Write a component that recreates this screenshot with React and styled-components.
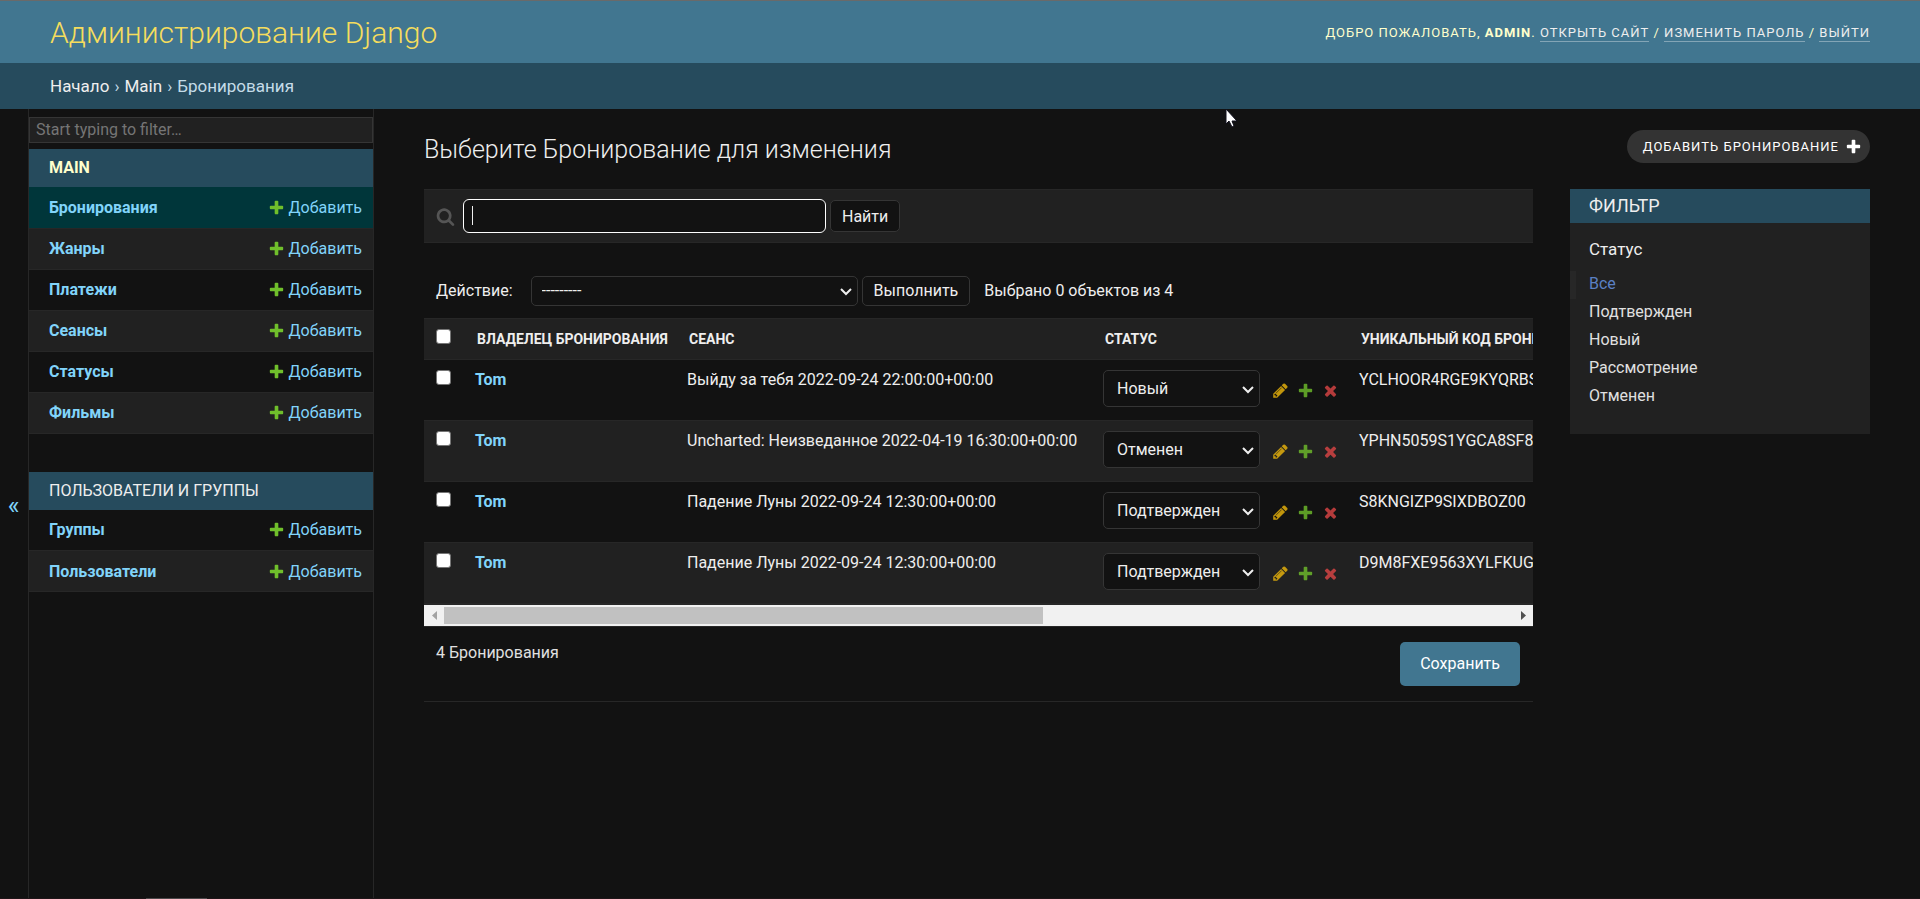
import React from "react";
import styled, { createGlobalStyle } from "styled-components";

const GlobalStyle = createGlobalStyle`
  *, *::before, *::after { box-sizing: border-box; }
  html, body { margin: 0; padding: 0; background: #121212; }
  body, button, input, select {
    font-family: Roboto, "Liberation Sans", sans-serif;
    font-size: 16px;
    color: #eeeeee;
  }
  a { color: #81d4fa; text-decoration: none; }
`;

const PATHS = {
  add: "M1600 796v192q0 40-28 68t-68 28h-416v416q0 40-28 68t-68 28h-192q-40 0-68-28t-28-68v-416h-416q-40 0-68-28t-28-68v-192q0-40 28-68t68-28h416v-416q0-40 28-68t68-28h192q40 0 68 28t28 68v416h416q40 0 68 28t28 68z",
  change:
    "M491 1536l91-91-235-235-91 91v107h128v128h107zm523-928q0-22-22-22-10 0-17 7l-542 542q-7 7-7 17 0 22 22 22 10 0 17-7l542-542q7-7 7-17zm-54-192l416 416-832 832h-416v-416zm683 96q0 53-37 90l-166 166-416-416 166-165q36-38 90-38 53 0 91 38l235 234q37 39 37 91z",
  remove:
    "M1490 1322q0 40-28 68l-136 136q-28 28-68 28t-68-28l-294-294-294 294q-28 28-68 28t-68-28l-136-136q-28-28-28-68t28-68l294-294-294-294q-28-28-28-68t28-68l136-136q28-28 68-28t68 28l294 294 294-294q28-28 68-28t68 28l136 136q28 28 28 68t-28 68l-294 294 294 294q28 28 28 68z",
  search:
    "M1216 832q0-185-131.5-316.5t-316.5-131.5-316.5 131.5-131.5 316.5 131.5 316.5 316.5 131.5 316.5-131.5 131.5-316.5zm512 832q0 52-38 90t-90 38q-54 0-90-38l-343-342q-179 124-399 124-143 0-273.5-55.5t-225-150-150-225-55.5-273.5 55.5-273.5 150-225 225-150 273.5-55.5 273.5 55.5 225 150 150 225 55.500 273.5q0 220-124 399l343 343q37 37 37 90z",
};

function Icon({ name, size = 17, color }) {
  return (
    <svg width={size} height={size} viewBox="0 0 1792 1792" fill={color} aria-hidden="true">
      <path d={PATHS[name]} />
    </svg>
  );
}

const Page = styled.div`
  display: flex;
  flex-direction: column;
  min-height: 100vh;
  border-top: 1px solid #6a6a6a;
`;

const Header = styled.header`
  display: flex;
  align-items: center;
  justify-content: space-between;
  height: 62px;
  padding: 2px 50px 0;
  background: #417690;
`;

const Branding = styled.h1`
  margin: 0;
  font-size: 30px;
  font-weight: 300;
  line-height: 36px;
  a { color: #f5dd5d; }
`;

const UserTools = styled.div`
  color: #ffffcc;
  font-size: 13px;
  line-height: 17px;
  font-weight: 400;
  letter-spacing: 1px;
  text-transform: uppercase;
  a {
    display: inline-block;
    color: #eeeeee;
    border-bottom: 1px solid rgba(255, 255, 255, 0.35);
  }
`;

const Breadcrumbs = styled.nav`
  display: flex;
  align-items: center;
  gap: 5px;
  height: 46px;
  padding: 0 50px;
  background: #264b5d;
  color: #c4dce8;
  font-size: 17px;
  a { color: #eeeeee; }
`;

const Main = styled.div`
  display: flex;
  flex: 1;
`;

const NavToggle = styled.button`
  flex: 0 0 29px;
  padding: 3px 1px 0 0;
  border: 0;
  border-right: 1px solid #272727;
  background: #121212;
  color: #81d4fa;
  font-size: 25px;
`;

const Sidebar = styled.nav`
  flex: 0 0 345px;
  padding-top: 8px;
  border-right: 1px solid #272727;
`;

const NavFilter = styled.input`
  display: block;
  width: 100%;
  height: 26px;
  margin-bottom: 6px;
  padding: 0 6px 2px;
  border: 1px solid #353535;
  border-radius: 0;
  background: #212121;
  &::placeholder { color: #757575; }
`;

const AppTable = styled.table`
  width: 100%;
  margin-bottom: 38px;
  border-collapse: collapse;
  caption {
    height: 38px;
    padding: 0 20px;
    background: #264b5d;
    line-height: 38px;
    text-align: left;
    text-transform: uppercase;
  }
  caption a {
    color: ${(p) => (p.$active ? "#ffffcc" : "#eeeeee")};
    font-weight: ${(p) => (p.$active ? 700 : 400)};
  }
`;

const ModelRow = styled.tr`
  height: 41px;
  background: ${(p) => (p.$current ? "#00363a" : p.$alt ? "#212121" : "#121212")};
  border-bottom: 1px solid #272727;
  th { padding: 0 20px; text-align: left; font-weight: 700; }
  td { padding: 0 11px 0 0; }
`;

const AddLink = styled.a`
  display: flex;
  align-items: center;
  justify-content: flex-end;
  gap: 4px;
`;

const Content = styled.main`
  flex: 1;
  min-width: 0;
  padding: 21px 50px 40px;
`;

const TitleRow = styled.div`
  display: flex;
  justify-content: space-between;
  align-items: flex-start;
  height: 59px;
`;

const Title = styled.h2`
  margin: 0;
  padding-top: 5px;
  font-size: 25px;
  font-weight: 300;
  line-height: 30px;
`;

const AddButton = styled.a`
  display: flex;
  align-items: center;
  gap: 6px;
  height: 33px;
  padding: 0 8px 0 16px;
  border-radius: 17px;
  background: #333333;
  color: #ffffff;
  font-size: 13px;
  letter-spacing: 1px;
  text-transform: uppercase;
`;

const Columns = styled.div`
  display: flex;
  align-items: flex-start;
  gap: 37px;
`;

const ChangeList = styled.section`
  flex: 1;
  min-width: 0;
`;

const Toolbar = styled.form`
  display: flex;
  align-items: center;
  height: 54px;
  padding: 0 12px;
  border-top: 1px solid #272727;
  border-bottom: 1px solid #272727;
  background: #212121;
  label { display: flex; width: 27px; }
`;

const SearchField = styled.div`
  position: relative;
  display: flex;
  margin-right: 4px;
`;

const SearchInput = styled.input`
  width: 363px;
  height: 34px;
  padding: 0 8px;
  border: 1px solid #ffffff;
  border-radius: 6px;
  background: #121212;
  outline: none;
`;

const Caret = styled.span`
  position: absolute;
  left: 9px;
  top: 7px;
  width: 1px;
  height: 19px;
  background: #eeeeee;
`;

const OutlineButton = styled.button`
  height: ${(p) => p.$height}px;
  padding: 0 11px;
  border: 1px solid #353535;
  border-radius: 5px;
  background: #121212;
`;

const Actions = styled.form`
  display: flex;
  align-items: center;
  height: 75px;
  padding: 20px 12px 0;
  label { display: flex; align-items: center; gap: 18px; }
`;

const SelectBox = styled.span`
  position: relative;
  display: inline-flex;
  width: ${(p) => p.$width}px;
  margin-right: ${(p) => p.$gap}px;
  select {
    width: 100%;
    height: ${(p) => p.$height}px;
    padding: 0 ${(p) => p.$pad}px;
    border: 1px solid #353535;
    border-radius: 5px;
    background: #121212;
    appearance: none;
  }
  svg {
    position: absolute;
    right: 6px;
    top: 50%;
    margin-top: -3px;
    pointer-events: none;
  }
`;

const ActionCount = styled.span`
  margin-left: 14px;
`;

const TableScroll = styled.div`
  overflow: hidden;
  padding-bottom: 1px;
  background: #272727;
`;

const ResultTable = styled.table`
  width: 179%;
  table-layout: fixed;
  border-collapse: collapse;
  white-space: nowrap;
  th, td { text-align: left; vertical-align: top; }
`;

const Col = styled.col`
  width: ${(p) => (p.$width ? `${p.$width}px` : "auto")};
`;

const HeadRow = styled.tr`
  height: 41px;
  background: #212121;
  border-top: 1px solid #272727;
  border-bottom: 1px solid #272727;
  th { padding: 11px 12px 0; font-size: 14px; font-weight: 700; line-height: 18px; text-transform: uppercase; }
  th:first-child { padding-top: 10px; }
`;

const ResultRow = styled.tr`
  height: 61px;
  background: ${(p) => (p.$alt ? "#212121" : "#121212")};
  border-bottom: 1px solid #272727;
  th, td { padding: 10px 10px 0; line-height: 19px; }
  th { font-weight: 700; }
  td:first-child { padding-left: 12px; }
`;

const Checkbox = styled.input`
  display: block;
  appearance: none;
  width: 15px;
  height: 15px;
  margin: 0;
  border: 1px solid #767676;
  border-radius: 3px;
  background: #ffffff;
`;

const StatusCell = styled.div`
  display: flex;
  align-items: center;
`;

const RowActions = styled.span`
  display: flex;
  gap: 8px;
  padding-top: 3px;
  opacity: 0.8;
  a { display: flex; }
`;

const ScrollBar = styled.div`
  display: flex;
  align-items: center;
  height: 21px;
  background: #f1f1f1;
`;

const ScrollArrow = styled.svg`
  flex: 0 0 20px;
  height: 21px;
`;

const ScrollTrack = styled.div`
  flex: 1;
`;

const ScrollThumb = styled.div`
  width: 56%;
  height: 17px;
  background: #c1c1c1;
`;

const Paginator = styled.div`
  display: flex;
  justify-content: space-between;
  align-items: flex-start;
  height: 76px;
  padding: 15px 13px 0 12px;
  border-top: 1px solid #272727;
  border-bottom: 1px solid #272727;
  line-height: 22px;
  color: #e0e0e0;
`;

const SaveButton = styled.button`
  height: 44px;
  padding: 0 20px 2px;
  border: 0;
  border-radius: 5px;
  background: #417690;
  color: #ffffff;
`;

const FilterPanel = styled.aside`
  flex: 0 0 300px;
  padding-bottom: 23px;
  background: #212121;
  h2 {
    margin: 0;
    padding: 0 19px;
    background: #264b5d;
    font-size: 18px;
    font-weight: 400;
    line-height: 34px;
    text-transform: uppercase;
  }
  h3 {
    margin: 0;
    padding: 15px 19px 11px;
    font-size: 17px;
    font-weight: 400;
    line-height: 22px;
  }
  ul { margin: 0; padding: 0; list-style: none; }
`;

const FilterItem = styled.li`
  height: 28px;
  padding-left: ${(p) => (p.$selected ? 13 : 19)}px;
  border-left: ${(p) => (p.$selected ? "6px solid #272727" : "0")};
  line-height: 26px;
  a { color: ${(p) => (p.$selected ? "#5b80c4" : "#e0e0e0")}; }
`;

const BottomEdge = styled.div`
  height: 1px;
  padding-left: 146px;
  background: #1e1518;
  span { display: block; width: 61px; height: 1px; background: #4c484a; }
`;

const Pointer = styled.svg`
  position: absolute;
  left: 1225px;
  top: 108px;
  pointer-events: none;
`;

function Chevron() {
  return (
    <svg width="12" height="8" viewBox="0 0 12 8" fill="none" stroke="#eeeeee" strokeWidth="2" aria-hidden="true">
      <path d="M1 1l5 5 5-5" />
    </svg>
  );
}

const STATUSES = ["Подтвержден", "Новый", "Рассмотрение", "Отменен"];

const APPS = [
  {
    name: "Main",
    active: true,
    models: ["Бронирования", "Жанры", "Платежи", "Сеансы", "Статусы", "Фильмы"],
  },
  { name: "Пользователи и группы", active: false, models: ["Группы", "Пользователи"] },
];

const BOOKINGS = [
  { session: "Выйду за тебя 2022-09-24 22:00:00+00:00", status: "Новый", code: "YCLHOOR4RGE9KYQRBS" },
  { session: "Uncharted: Неизведанное 2022-04-19 16:30:00+00:00", status: "Отменен", code: "YPHN5059S1YGCA8SF8" },
  { session: "Падение Луны 2022-09-24 12:30:00+00:00", status: "Подтвержден", code: "S8KNGIZP9SIXDBOZ00" },
  { session: "Падение Луны 2022-09-24 12:30:00+00:00", status: "Подтвержден", code: "D9M8FXE9563XYLFKUG" },
];

export default function App() {
  return (
    <>
      <GlobalStyle />
      <Page>
        <Header>
          <Branding><a href="#home">Администрирование Django</a></Branding>
          <UserTools>
            Добро пожаловать, <strong>admin</strong>. <a href="#site">Открыть сайт</a> /{" "}
            <a href="#password">Изменить пароль</a> / <a href="#logout">Выйти</a>
          </UserTools>
        </Header>
        <Breadcrumbs>
          <a href="#home">Начало</a>
          <span>›</span>
          <a href="#main">Main</a>
          <span>›</span>
          <span>Бронирования</span>
        </Breadcrumbs>
        <Main>
          <NavToggle type="button" aria-label="Toggle navigation">«</NavToggle>
          <Sidebar>
            <NavFilter type="search" placeholder="Start typing to filter…" aria-label="Filter navigation items" />
            {APPS.map((app) => (
              <AppTable key={app.name} $active={app.active}>
                <caption><a href="#app">{app.name}</a></caption>
                <tbody>
                  {app.models.map((model, i) => (
                    <ModelRow key={model} $alt={i % 2 === 1} $current={app.active && i === 0}>
                      <th scope="row"><a href="#model">{model}</a></th>
                      <td>
                        <AddLink href="#add">
                          <Icon name="add" color="#70bf2b" />
                          Добавить
                        </AddLink>
                      </td>
                    </ModelRow>
                  ))}
                </tbody>
              </AppTable>
            ))}
          </Sidebar>
          <Content>
            <TitleRow>
              <Title>Выберите Бронирование для изменения</Title>
              <AddButton href="#add">
                Добавить Бронирование
                <Icon name="add" color="#ffffff" />
              </AddButton>
            </TitleRow>
            <Columns>
              <ChangeList>
                <Toolbar onSubmit={(e) => e.preventDefault()}>
                  <label htmlFor="searchbar" aria-label="Поиск">
                    <Icon name="search" size={19} color="#555555" />
                  </label>
                  <SearchField>
                    <SearchInput id="searchbar" type="text" />
                    <Caret />
                  </SearchField>
                  <OutlineButton type="submit" $height={32}>Найти</OutlineButton>
                </Toolbar>
                <Actions onSubmit={(e) => e.preventDefault()}>
                  <label>
                    Действие:
                    <SelectBox $width={327} $height={30} $pad={10} $gap={4}>
                      <select defaultValue="">
                        <option value="">---------</option>
                        <option value="delete">Удалить выбранные Бронирования</option>
                      </select>
                      <Chevron />
                    </SelectBox>
                  </label>
                  <OutlineButton type="submit" $height={30}>Выполнить</OutlineButton>
                  <ActionCount>Выбрано 0 объектов из 4</ActionCount>
                </Actions>
                <TableScroll>
                  <ResultTable>
                    <colgroup>
                      <Col $width={41} />
                      <Col $width={212} />
                      <Col $width={416} />
                      <Col $width={256} />
                      <Col />
                    </colgroup>
                    <thead>
                      <HeadRow>
                        <th scope="col"><Checkbox type="checkbox" aria-label="Выбрать все" /></th>
                        <th scope="col">Владелец бронирования</th>
                        <th scope="col">Сеанс</th>
                        <th scope="col">Статус</th>
                        <th scope="col">Уникальный код бронирования</th>
                      </HeadRow>
                    </thead>
                    <tbody>
                      {BOOKINGS.map((b, i) => (
                        <ResultRow key={b.code} $alt={i % 2 === 1}>
                          <td><Checkbox type="checkbox" aria-label={b.code} /></td>
                          <th scope="row"><a href="#booking">Tom</a></th>
                          <td>{b.session}</td>
                          <td>
                            <StatusCell>
                              <SelectBox $width={157} $height={37} $pad={13} $gap={12}>
                                <select defaultValue={b.status} aria-label="Статус">
                                  {STATUSES.map((s) => <option key={s}>{s}</option>)}
                                </select>
                                <Chevron />
                              </SelectBox>
                              <RowActions>
                                <a href="#change" aria-label="Изменить"><Icon name="change" color="#efb80b" /></a>
                                <a href="#add" aria-label="Добавить"><Icon name="add" color="#70bf2b" /></a>
                                <a href="#delete" aria-label="Удалить"><Icon name="remove" color="#dd4646" /></a>
                              </RowActions>
                            </StatusCell>
                          </td>
                          <td>{b.code}</td>
                        </ResultRow>
                      ))}
                    </tbody>
                  </ResultTable>
                </TableScroll>
                <ScrollBar>
                  <ScrollArrow viewBox="0 0 20 21"><path d="M13 6v9l-5-4.500z" fill="#a3a3a3" /></ScrollArrow>
                  <ScrollTrack><ScrollThumb /></ScrollTrack>
                  <ScrollArrow viewBox="0 0 20 21"><path d="M8 6v9l5-4.500z" fill="#505050" /></ScrollArrow>
                </ScrollBar>
                <Paginator>
                  <span>4 Бронирования</span>
                  <SaveButton type="submit">Сохранить</SaveButton>
                </Paginator>
              </ChangeList>
              <FilterPanel>
                <h2>Фильтр</h2>
                <h3>Статус</h3>
                <ul>
                  {["Все", ...STATUSES].map((s, i) => (
                    <FilterItem key={s} $selected={i === 0}><a href="#filter">{s}</a></FilterItem>
                  ))}
                </ul>
              </FilterPanel>
            </Columns>
          </Content>
        </Main>
        <BottomEdge><span /></BottomEdge>
      </Page>
      <Pointer width="13" height="20" viewBox="0 0 13 20" aria-hidden="true">
        <path d="M1 1v15l3-3 3 6 2-1-2-5h5z" fill="#ffffff" stroke="#10101c" strokeWidth="1" />
      </Pointer>
    </>
  );
}
